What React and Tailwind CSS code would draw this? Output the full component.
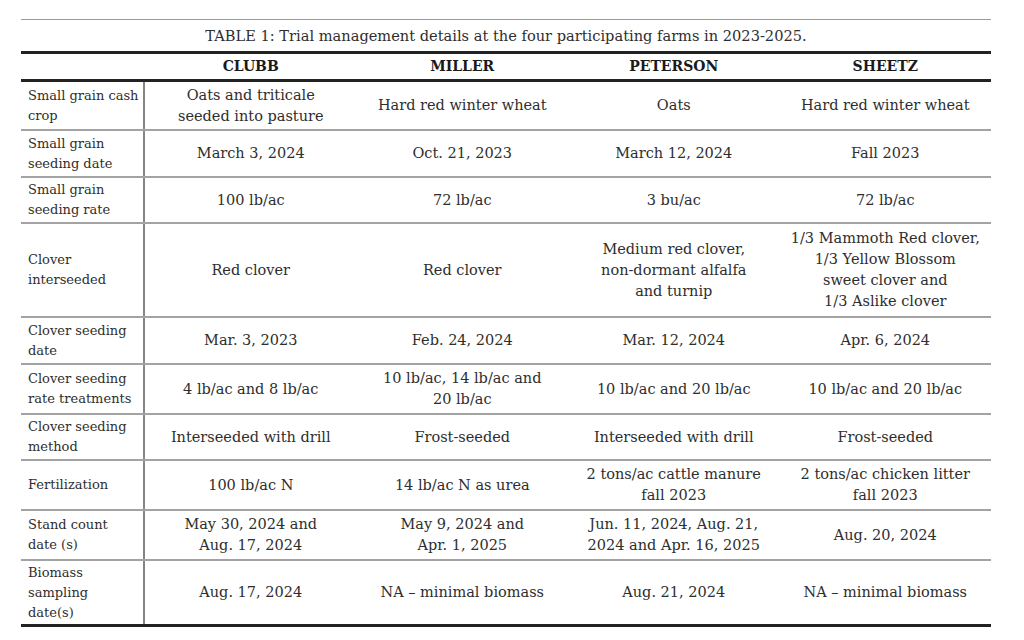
import React from 'react';

const FARMS = ['CLUBB', 'MILLER', 'PETERSON', 'SHEETZ'];

// each row: height (px, incl. bottom rule), label lines, and one array of lines per farm
const ROWS = [
  { h: 'h-[49px]', label: ['Small grain cash', 'crop'], cells: [['Oats and triticale', 'seeded into pasture'], ['Hard red winter wheat'], ['Oats'], ['Hard red winter wheat']] },
  { h: 'h-[47px]', label: ['Small grain', 'seeding date'], cells: [['March 3, 2024'], ['Oct. 21, 2023'], ['March 12, 2024'], ['Fall 2023']] },
  { h: 'h-[46px]', label: ['Small grain', 'seeding rate'], cells: [['100 lb/ac'], ['72 lb/ac'], ['3 bu/ac'], ['72 lb/ac']] },
  { h: 'h-[94px]', label: ['Clover', 'interseeded'], cells: [['Red clover'], ['Red clover'], ['Medium red clover,', 'non-dormant alfalfa', 'and turnip'], ['1/3 Mammoth Red clover,', '1/3 Yellow Blossom', 'sweet clover and', '1/3 Aslike clover']] },
  { h: 'h-[47px]', label: ['Clover seeding', 'date'], cells: [['Mar. 3, 2023'], ['Feb. 24, 2024'], ['Mar. 12, 2024'], ['Apr. 6, 2024']] },
  { h: 'h-[50px]', label: ['Clover seeding', 'rate treatments'], cells: [['4 lb/ac and 8 lb/ac'], ['10 lb/ac, 14 lb/ac and', '20 lb/ac'], ['10 lb/ac and 20 lb/ac'], ['10 lb/ac and 20 lb/ac']] },
  { h: 'h-[46px]', label: ['Clover seeding', 'method'], cells: [['Interseeded with drill'], ['Frost-seeded'], ['Interseeded with drill'], ['Frost-seeded']] },
  { h: 'h-[50px]', label: ['Fertilization'], cells: [['100 lb/ac N'], ['14 lb/ac N as urea'], ['2 tons/ac cattle manure', 'fall 2023'], ['2 tons/ac chicken litter', 'fall 2023']] },
  { h: 'h-[50px]', label: ['Stand count', 'date (s)'], cells: [['May 30, 2024 and', 'Aug. 17, 2024'], ['May 9, 2024 and', 'Apr. 1, 2025'], ['Jun. 11, 2024, Aug. 21,', '2024 and Apr. 16, 2025'], ['Aug. 20, 2024']] },
  { h: 'h-[66px]', label: ['Biomass', 'sampling', 'date(s)'], cells: [['Aug. 17, 2024'], ['NA – minimal biomass'], ['Aug. 21, 2024'], ['NA – minimal biomass']] },
];

function Lines({ lines }) {
  return lines.map((l, i) => <div key={i}>{l}</div>);
}

export default function App() {
  return (
    <div className="min-h-screen w-full bg-white font-['DejaVu_Serif',serif] text-[#2e2e2e]">
      <div className="ml-[21px] w-[970px] pt-[19px]">
        <div className="border-t border-[#9a9a9a]">
          {/* caption */}
          <div className="flex h-[31px] items-center justify-center text-[14.6px]">
            TABLE 1: Trial management details at the four participating farms in 2023-2025.
          </div>

          {/* header */}
          <div className="flex h-[31px] items-center border-y-[3px] border-[#222]">
            <div className="w-[124px]" />
            {FARMS.map((f) => (
              <div key={f} className="flex-1 text-center text-[14px] font-bold text-[#1a1a1a]">{f}</div>
            ))}
          </div>

          {/* body */}
          {ROWS.map((row, ri) => (
            <div
              key={ri}
              className={`flex ${row.h} ${ri === ROWS.length - 1 ? 'border-b-[3px] border-[#222]' : 'border-b-2 border-[#a3a3a3]'}`}
            >
              <div className="flex w-[124px] shrink-0 flex-col justify-center border-r-2 border-[#858585] pl-[7px] text-[13px] leading-[20px]">
                <Lines lines={row.label} />
              </div>
              {row.cells.map((c, ci) => (
                <div key={ci} className="flex flex-1 flex-col items-center justify-center text-center text-[14.5px] leading-[21px]">
                  <Lines lines={c} />
                </div>
              ))}
            </div>
          ))}
        </div>
      </div>
    </div>
  );
}
